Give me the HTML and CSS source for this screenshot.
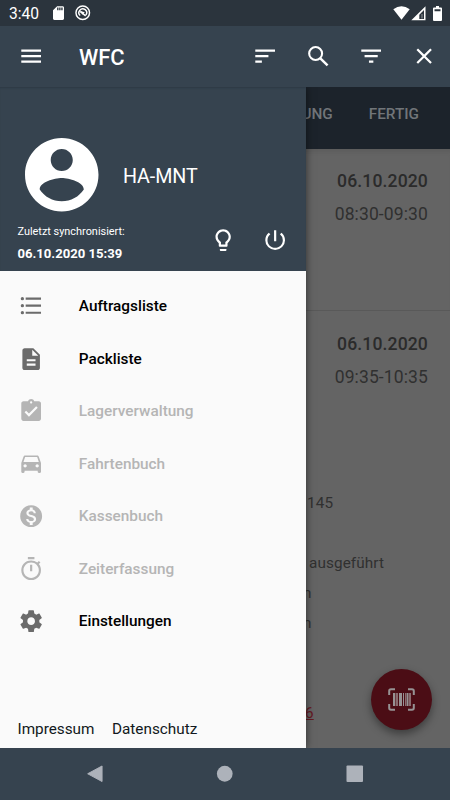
FILE: index.html
```html
<!DOCTYPE html>
<html lang="de">
<head>
<meta charset="utf-8">
<title>WFC</title>
<link rel="stylesheet" href="styles.css">
</head>
<body>
<div class="phone">
  <header class="status">
    <span class="clock">3:40</span>
    <svg class="sd" viewBox="4 2 16 20"><path d="M18 2h-8L4 8v12c0 1.100.9 2 2 2h12c1.100 0 2-.9 2-2V4c0-1.100-.9-2-2-2zm-6 6h-2V4h2v4zm3 0h-2V4h2v4zm3 0h-2V4h2v4z"/></svg>
    <svg class="dnd" viewBox="0 0 16 16"><circle cx="8" cy="8" r="7" fill="none" stroke="#fff" stroke-width="1.500"/><path d="M5.300 10.900A4 4 0 1 1 11.300 10.300M5.500 6.800l5.500 4.400" fill="none" stroke="#fff" stroke-width="1.500"/><path d="M5 6l5 1.500-2 2.500z"/></svg>
    <span class="grow"></span>
    <svg class="wifi" viewBox="0 0 17 14"><path d="M.3 3.300Q8.500-2.800 16.700 3.300L8.500 13.700z"/></svg>
    <svg class="cell" viewBox="0 0 15 15"><path fill-rule="evenodd" d="M14.500.3v14H.3zM13 4v8.900H8.300V8.700z"/><path d="M10.500 8h1v4.500h-1z" opacity=".5"/></svg>
    <svg class="battery" viewBox="0 0 9 15"><path fill-rule="evenodd" d="M3 0h3v1.500h2q1 0 1 1V14q0 1-1 1H1q-1 0-1-1V2.500q0-1 1-1h2zM1.500 3.300v1.900h6V3.300z"/></svg>
  </header>

  <nav class="appbar">
    <svg class="icon" viewBox="0 0 24 24"><path d="M3 18h18v-2H3v2zm0-5h18v-2H3v2zm0-7v2h18V6H3z"/></svg>
    <h1>WFC</h1>
    <svg class="icon" viewBox="0 0 24 24"><path d="M3 18h6v-2H3v2zM3 6v2h18V6H3zm0 7h12v-2H3v2z"/></svg>
    <svg class="icon" viewBox="0 0 24 24"><g fill="none" stroke="currentColor" stroke-width="1.900"><circle cx="9.700" cy="9.600" r="5.900"/><path d="M14 14l6.600 6.400" stroke-width="2.200"/></g></svg>
    <svg class="icon" viewBox="0 0 24 24"><path d="M10 18h4v-2h-4v2zM3 6v2h18V6H3zm3 7h12v-2H6v2z"/></svg>
    <svg class="icon" viewBox="0 0 24 24"><path d="M19 6.410L17.590 5 12 10.590 6.410 5 5 6.410 10.590 12 5 17.590 6.410 19 12 13.410 17.590 19 19 17.590 13.410 12z"/></svg>
  </nav>

  <main class="stage">
    <section class="content">
      <div class="tabs"><span>BEARBEITUNG</span><span>FERTIG</span></div>
      <article class="order first"><b>06.10.2020</b><span>08:30-09:30</span></article>
      <article class="order second">
        <b>06.10.2020</b><span>09:35-10:35</span>
        <div class="details">
          <p class="d-number">145</p>
          <p class="d-done">ausgeführt</p>
          <p class="d-cut">n</p>
          <p class="d-cut">n</p>
          <p class="d-link">6</p>
        </div>
      </article>
    </section>

    <button class="fab" aria-label="Barcode">
      <svg viewBox="0 0 27 23"><path d="M1.200 7V3q0-1.800 1.800-1.800h4M20 1.200h4q1.800 0 1.800 1.800v4M25.800 16v4q0 1.800-1.800 1.800h-4M7 21.800H3q-1.800 0-1.800-1.800v-4" fill="none" stroke="#979394" stroke-width="2"/><path d="M5 5h2v13H5zM11 5h3v13h-3zM15 5h1v13h-1zM18.500 5h2v13h-2z" fill="#979394"/><path d="M7.500 5H10v13H7.500zM17 5h1v13h-1zM21 5h2v13h-2z" fill="#896b6f"/></svg>
    </button>

    <aside class="drawer">
      <div class="profile">
        <div class="person">
          <svg class="avatar" viewBox="2 2 20 20"><path d="M12 2C6.480 2 2 6.480 2 12s4.480 10 10 10 10-4.480 10-10S17.520 2 12 2zm0 3c1.660 0 3 1.340 3 3s-1.340 3-3 3-3-1.340-3-3 1.340-3 3-3zm0 14.200c-2.500 0-4.710-1.280-6-3.220.03-1.990 4-3.080 6-3.080 1.990 0 5.970 1.090 6 3.080-1.290 1.940-3.500 3.220-6 3.220z"/></svg>
          <span class="name">HA-MNT</span>
        </div>
        <div class="sync">
          <div class="sync-text"><span>Zuletzt synchronisiert:</span><b>06.10.2020 15:39</b></div>
          <svg class="icon" viewBox="0 0 24 24"><path d="M9 21c0 .55.45 1 1 1h4c.55 0 1-.45 1-1v-1H9v1zm3-19C8.140 2 5 5.140 5 9c0 2.380 1.190 4.470 3 5.740V17c0 .55.45 1 1 1h6c.55 0 1-.45 1-1v-2.260c1.810-1.270 3-3.360 3-5.740 0-3.860-3.140-7-7-7zm2.850 11.100l-.85.6V16h-4v-2.300l-.85-.6A4.997 4.997 0 0 1 7 9c0-2.760 2.240-5 5-5s5 2.240 5 5c0 1.630-.8 3.160-2.150 4.100z"/></svg>
          <svg class="icon" viewBox="0 0 24 24"><path d="M13 3h-2v10h2V3zm4.830 2.170l-1.420 1.420A6.920 6.920 0 0 1 19 12c0 3.870-3.130 7-7 7s-7-3.130-7-7c0-2.190 1.010-4.140 2.580-5.420L6.170 5.170A8.932 8.932 0 0 0 3 12a9 9 0 0 0 18 0c0-2.740-1.230-5.180-3.170-6.830z"/></svg>
        </div>
      </div>
      <ul class="menu">
        <li><svg class="icon" viewBox="0 0 24 24"><circle cx="4" cy="5.200" r="1.500"/><circle cx="4" cy="11.600" r="1.500"/><circle cx="4" cy="18" r="1.500"/><path d="M7 4.200h14v2H7zM7 10.600h14v2H7zM7 17h14v2H7z"/></svg>Auftragsliste</li>
        <li><svg class="icon" viewBox="0 0 24 24"><path d="M14 2H6c-1.100 0-1.990.9-1.990 2L4 20c0 1.100.89 2 1.990 2H18c1.100 0 2-.9 2-2V8l-6-6zm2 16H8v-2h8v2zm0-4H8v-2h8v2zm-3-5V3.500L18.500 9H13z"/></svg>Packliste</li>
        <li class="off"><svg class="icon" viewBox="0 0 24 24"><path d="M19 3h-4.180C14.400 1.840 13.300 1 12 1s-2.400.84-2.820 2H5c-1.100 0-2 .9-2 2v14c0 1.100.9 2 2 2h14c1.100 0 2-.9 2-2V5c0-1.100-.9-2-2-2zm-7 0c.55 0 1 .45 1 1s-.45 1-1 1-1-.45-1-1 .45-1 1-1zm-2 14l-4-4 1.410-1.410L10 14.170l6.590-6.590L18 9l-8 8z"/></svg>Lagerverwaltung</li>
        <li class="off"><svg class="icon" viewBox="0 0 24 24"><path d="M18.920 5.010C18.720 4.420 18.160 4 17.500 4h-11c-.66 0-1.210.42-1.420 1.010L3 11v8c0 .55.45 1 1 1h1c.55 0 1-.45 1-1v-1h12v1c0 .55.45 1 1 1h1c.55 0 1-.45 1-1v-8l-2.080-5.990zM6.500 15c-.83 0-1.500-.67-1.500-1.500S5.670 12 6.500 12s1.500.67 1.500 1.500S7.330 15 6.500 15zm11 0c-.83 0-1.500-.67-1.500-1.500s.67-1.500 1.500-1.500 1.500.67 1.500 1.500-.67 1.500-1.500 1.500zM5 10l1.500-4.500h11L19 10H5z"/></svg>Fahrtenbuch</li>
        <li class="off"><svg class="icon" viewBox="0 0 24 24"><path d="M12 2C6.480 2 2 6.480 2 12s4.480 10 10 10 10-4.480 10-10S17.520 2 12 2zm1.410 16.090V20h-2.670v-1.930c-1.710-.36-3.160-1.460-3.270-3.400h1.960c.1 1.050.82 1.870 2.650 1.870 1.960 0 2.400-.98 2.400-1.590 0-.83-.44-1.610-2.670-2.140-2.480-.6-4.180-1.620-4.180-3.670 0-1.720 1.390-2.840 3.110-3.210V4h2.670v1.950c1.860.45 2.790 1.860 2.850 3.390H14.300c-.05-1.110-.64-1.870-2.220-1.870-1.500 0-2.400.68-2.400 1.640 0 .84.65 1.390 2.670 1.910s4.180 1.390 4.180 3.910c-.01 1.830-1.380 2.830-3.120 3.160z"/></svg>Kassenbuch</li>
        <li class="off"><svg class="icon" viewBox="0 0 24 24"><path d="M15 1H9v2h6V1zm-4 13h2V8h-2v6zm8.030-6.610l1.420-1.420c-.43-.51-.9-.99-1.410-1.410l-1.420 1.420A8.962 8.962 0 0 0 12 4a9 9 0 1 0 7.030 3.390zM12 20c-3.870 0-7-3.130-7-7s3.130-7 7-7 7 3.130 7 7-3.130 7-7 7z"/></svg>Zeiterfassung</li>
        <li><svg class="icon" viewBox="0 0 24 24"><path d="M19.430 12.980c.04-.32.07-.64.07-.98s-.03-.66-.07-.98l2.110-1.650c.19-.15.24-.42.12-.64l-2-3.460c-.12-.22-.39-.3-.61-.22l-2.490 1c-.52-.4-1.080-.73-1.690-.98l-.38-2.650C14.460 2.180 14.250 2 14 2h-4c-.25 0-.46.18-.49.42l-.38 2.650c-.61.25-1.170.59-1.690.98l-2.490-1c-.23-.09-.49 0-.61.22l-2 3.460c-.13.22-.07.49.12.64l2.110 1.650c-.04.32-.07.65-.07.98s.03.66.07.98l-2.110 1.650c-.19.15-.24.42-.12.64l2 3.460c.12.22.39.3.61.22l2.490-1c.52.4 1.080.73 1.690.98l.38 2.650c.03.24.24.42.49.42h4c.25 0 .46-.18.49-.42l.38-2.650c.61-.25 1.170-.59 1.690-.98l2.490 1c.23.09.49 0 .61-.22l2-3.460c.12-.22.07-.49-.12-.64l-2.110-1.650zM12 15.500c-1.930 0-3.500-1.570-3.500-3.500s1.570-3.500 3.500-3.500 3.500 1.570 3.500 3.500-1.570 3.500-3.500 3.500z"/></svg>Einstellungen</li>
      </ul>
      <footer class="legal"><span>Impressum</span><span>Datenschutz</span></footer>
    </aside>
  </main>

  <footer class="navbar">
    <svg viewBox="0 0 18 18"><path d="M15.500 1v16L.7 9z" stroke="#adb2ba" stroke-linejoin="round"/></svg>
    <svg viewBox="0 0 18 18"><circle cx="9" cy="9" r="8.100"/></svg>
    <svg viewBox="0 0 18 18"><rect x=".5" y=".5" width="17" height="17" rx="1"/></svg>
  </footer>
</div>
</body>
</html>
```

FILE: styles.css
```css
* { box-sizing: border-box; margin: 0; padding: 0; }
body { font-family: Roboto, "Liberation Sans", sans-serif; background: #36434f; }
svg { display: block; fill: currentColor; flex: none; overflow: visible; }
.phone { width: 450px; height: 800px; display: flex; flex-direction: column; overflow: hidden; color: #fff; background: #36434f; }
.icon { width: 26.3px; height: 26.3px; }
.grow { flex: 1; }

.status { height: 26px; flex: none; background: #2b343d; display: flex; align-items: center; padding: 0 8px 0 9px; }
.clock { font-size: 15.6px; width: 44px; padding-top: 2px; }
.sd { width: 11px; height: 14px; }
.dnd { width: 15.5px; height: 15.5px; margin-left: 11px; }
.wifi { width: 17px; height: 14px; }
.cell { width: 15px; height: 15px; margin-left: 1px; }
.battery { width: 9px; height: 15px; margin-left: 7px; }

.appbar { height: 61px; flex: none; display: flex; align-items: center; gap: 26.6px; padding: 0 13px 0 17.5px; }
.appbar h1 { flex: 1; font-size: 21.9px; font-weight: 500; padding: 2px 0 0 8.5px; }

.stage { height: 661px; flex: none; position: relative; overflow: hidden; background: #646464; }
.content { color: #303030; }
.tabs { height: 62px; background: #1c232b; color: #717579; display: flex; justify-content: flex-end; gap: 36px; padding: 18px 31px 0 0; font-size: 15.3px; font-weight: 500; line-height: 19px; }
.order { display: flex; flex-direction: column; align-items: flex-end; padding: 20px 22px 0 0; font-size: 17.5px; line-height: 25px; letter-spacing: .12px; }
.order b { font-weight: 500; margin-bottom: 8px; letter-spacing: .12px; font-size: 17.6px; color: #2b2b2b; }
.first { height: 162px; border-bottom: 1px solid #595959; box-shadow: inset 0 6px 5px -4px #5a5a5a; }
.second { padding-top: 21px; }
.details { align-self: stretch; margin: 101px 0 0 306px; font-size: 15.3px; line-height: 24px; letter-spacing: .1px; }
.d-number { margin-left: 1px; }
.d-done { margin: 36px 0 6px 3px; }
.d-cut { margin: 0 0 6px -3px; }
.d-link { margin: 66px 0 0 -1px; color: #651923; text-decoration: underline; }

.fab { position: absolute; left: 371px; top: 582px; width: 61px; height: 61px; border: 0; border-radius: 50%; background: #4b0d15; display: grid; place-items: center; box-shadow: 0 4px 8px #0006; }
.fab svg { width: 27px; height: 23px; }

.drawer { position: absolute; left: 0; top: 0; width: 306px; height: 661px; background: #fafafa; box-shadow: 0 0 8px #0008; display: flex; flex-direction: column; }
.profile { height: 184px; flex: none; background: #36434f; box-shadow: inset 0 2px 2px -1px #2d3944; padding: 51px 17.5px 0 17.5px; }
.person { display: flex; align-items: center; gap: 25px; padding-left: 7px; }
.avatar { width: 73.5px; height: 73.5px; }
.name { font-size: 19.7px; padding-top: 4px; letter-spacing: -.1px; }
.sync { display: flex; align-items: center; gap: 26px; margin-top: 11px; }
.sync-text { flex: 1; display: flex; flex-direction: column; font-size: 10.9px; line-height: 18px; }
.sync-text b { font-size: 13.1px; font-weight: 700; line-height: 26px; }
.sync .icon { margin-top: -8px; }

.menu { list-style: none; flex: 1; padding-top: 9px; }
.menu li { height: 52.5px; display: flex; align-items: center; gap: 35px; padding-left: 17.5px; font-size: 15.35px; font-weight: 500; color: #000; }
.menu .icon { color: #6b6b6b; }
.menu .off, .menu .off .icon { color: #b5b5b5; }
.legal { height: 38px; display: flex; gap: 17.5px; padding-left: 17.5px; font-size: 15.3px; line-height: 38px; color: #111820; }

.navbar { flex: 1; display: flex; justify-content: center; align-items: center; gap: 112px; color: #adb2ba; }
.navbar svg { width: 17.5px; height: 17.5px; }
```
